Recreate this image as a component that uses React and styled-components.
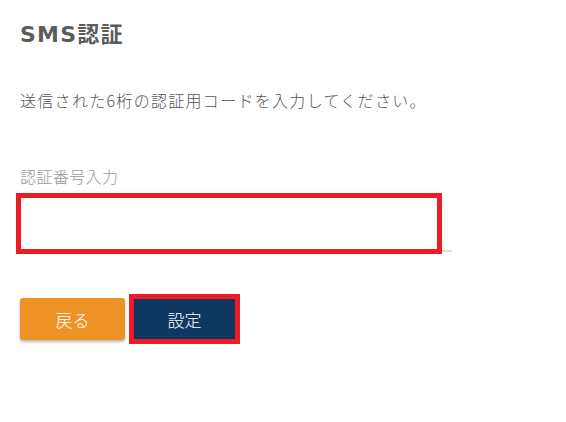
import React from 'react';
import styled, { createGlobalStyle } from 'styled-components';

const GlobalStyle = createGlobalStyle`
  html, body {
    margin: 0;
    padding: 0;
    background: #ffffff;
  }
  body {
    font-family: 'Noto Sans CJK JP', 'Noto Sans', sans-serif;
  }
`;

const Page = styled.div`
  display: flex;
  flex-direction: column;
  align-items: flex-start;
  padding: 23px 20px;
`;

const Title = styled.h1`
  margin: 0;
  font-family: 'DejaVu Sans', 'Noto Sans CJK JP', sans-serif;
  font-size: 22px;
  font-weight: bold;
  line-height: 24px;
  letter-spacing: 1.2px;
  color: #5c5c5c;
`;

const Description = styled.p`
  margin: 41px 0 0;
  font-size: 16px;
  font-weight: 300;
  line-height: 24px;
  letter-spacing: 1.3px;
  color: #555555;
`;

const Label = styled.label`
  margin-top: 52px;
  font-size: 16px;
  font-weight: 300;
  line-height: 24px;
  letter-spacing: 0.4px;
  color: #999999;
`;

const Field = styled.div`
  position: relative;
  margin-top: 5px;
  width: 432px;
`;

const Input = styled.input`
  display: block;
  box-sizing: border-box;
  width: 100%;
  height: 59px;
  border: none;
  border-bottom: 2px solid #dddddd;
  background: transparent;
  outline: none;
  font-size: 16px;
  color: #333333;
`;

// annotation frame drawn over the field
const Highlight = styled.div`
  position: absolute;
  left: -4px;
  top: 0;
  width: 426px;
  height: 61px;
  box-sizing: border-box;
  border: 5px solid #ec1c24;
  pointer-events: none;
`;

const Actions = styled.div`
  display: flex;
  align-items: center;
  gap: 4px;
  margin-top: 42px;
`;

const Button = styled.button`
  box-sizing: border-box;
  display: flex;
  align-items: center;
  justify-content: center;
  padding: 0;
  font-family: 'Noto Sans CJK JP', sans-serif;
  font-size: 17px;
  font-weight: 300;
  color: #ffffff;
  cursor: pointer;
  width: ${p => (p.$marked ? '111px' : '105px')};
  height: ${p => (p.$marked ? '50px' : '42px')};
  background: ${p => (p.$primary ? '#0f3760' : '#ee9226')};
  border: ${p => (p.$marked ? '5px solid #ec1c24' : 'none')};
  border-radius: ${p => (p.$marked ? '0' : '3px')};
  box-shadow: ${p => (p.$marked ? 'none' : '0 2px 3px rgba(0, 0, 0, 0.28)')};
`;

const App = () => {
  return (
    <>
      <GlobalStyle />
      <Page>
        <Title>SMS認証</Title>
        <Description>送信された6桁の認証用コードを入力してください。</Description>
        <Label htmlFor="sms-code">認証番号入力</Label>
        <Field>
          <Input id="sms-code" type="text" />
          <Highlight />
        </Field>
        <Actions>
          <Button type="button">戻る</Button>
          <Button type="button" $primary $marked>設定</Button>
        </Actions>
      </Page>
    </>
  );
};

export default App;
